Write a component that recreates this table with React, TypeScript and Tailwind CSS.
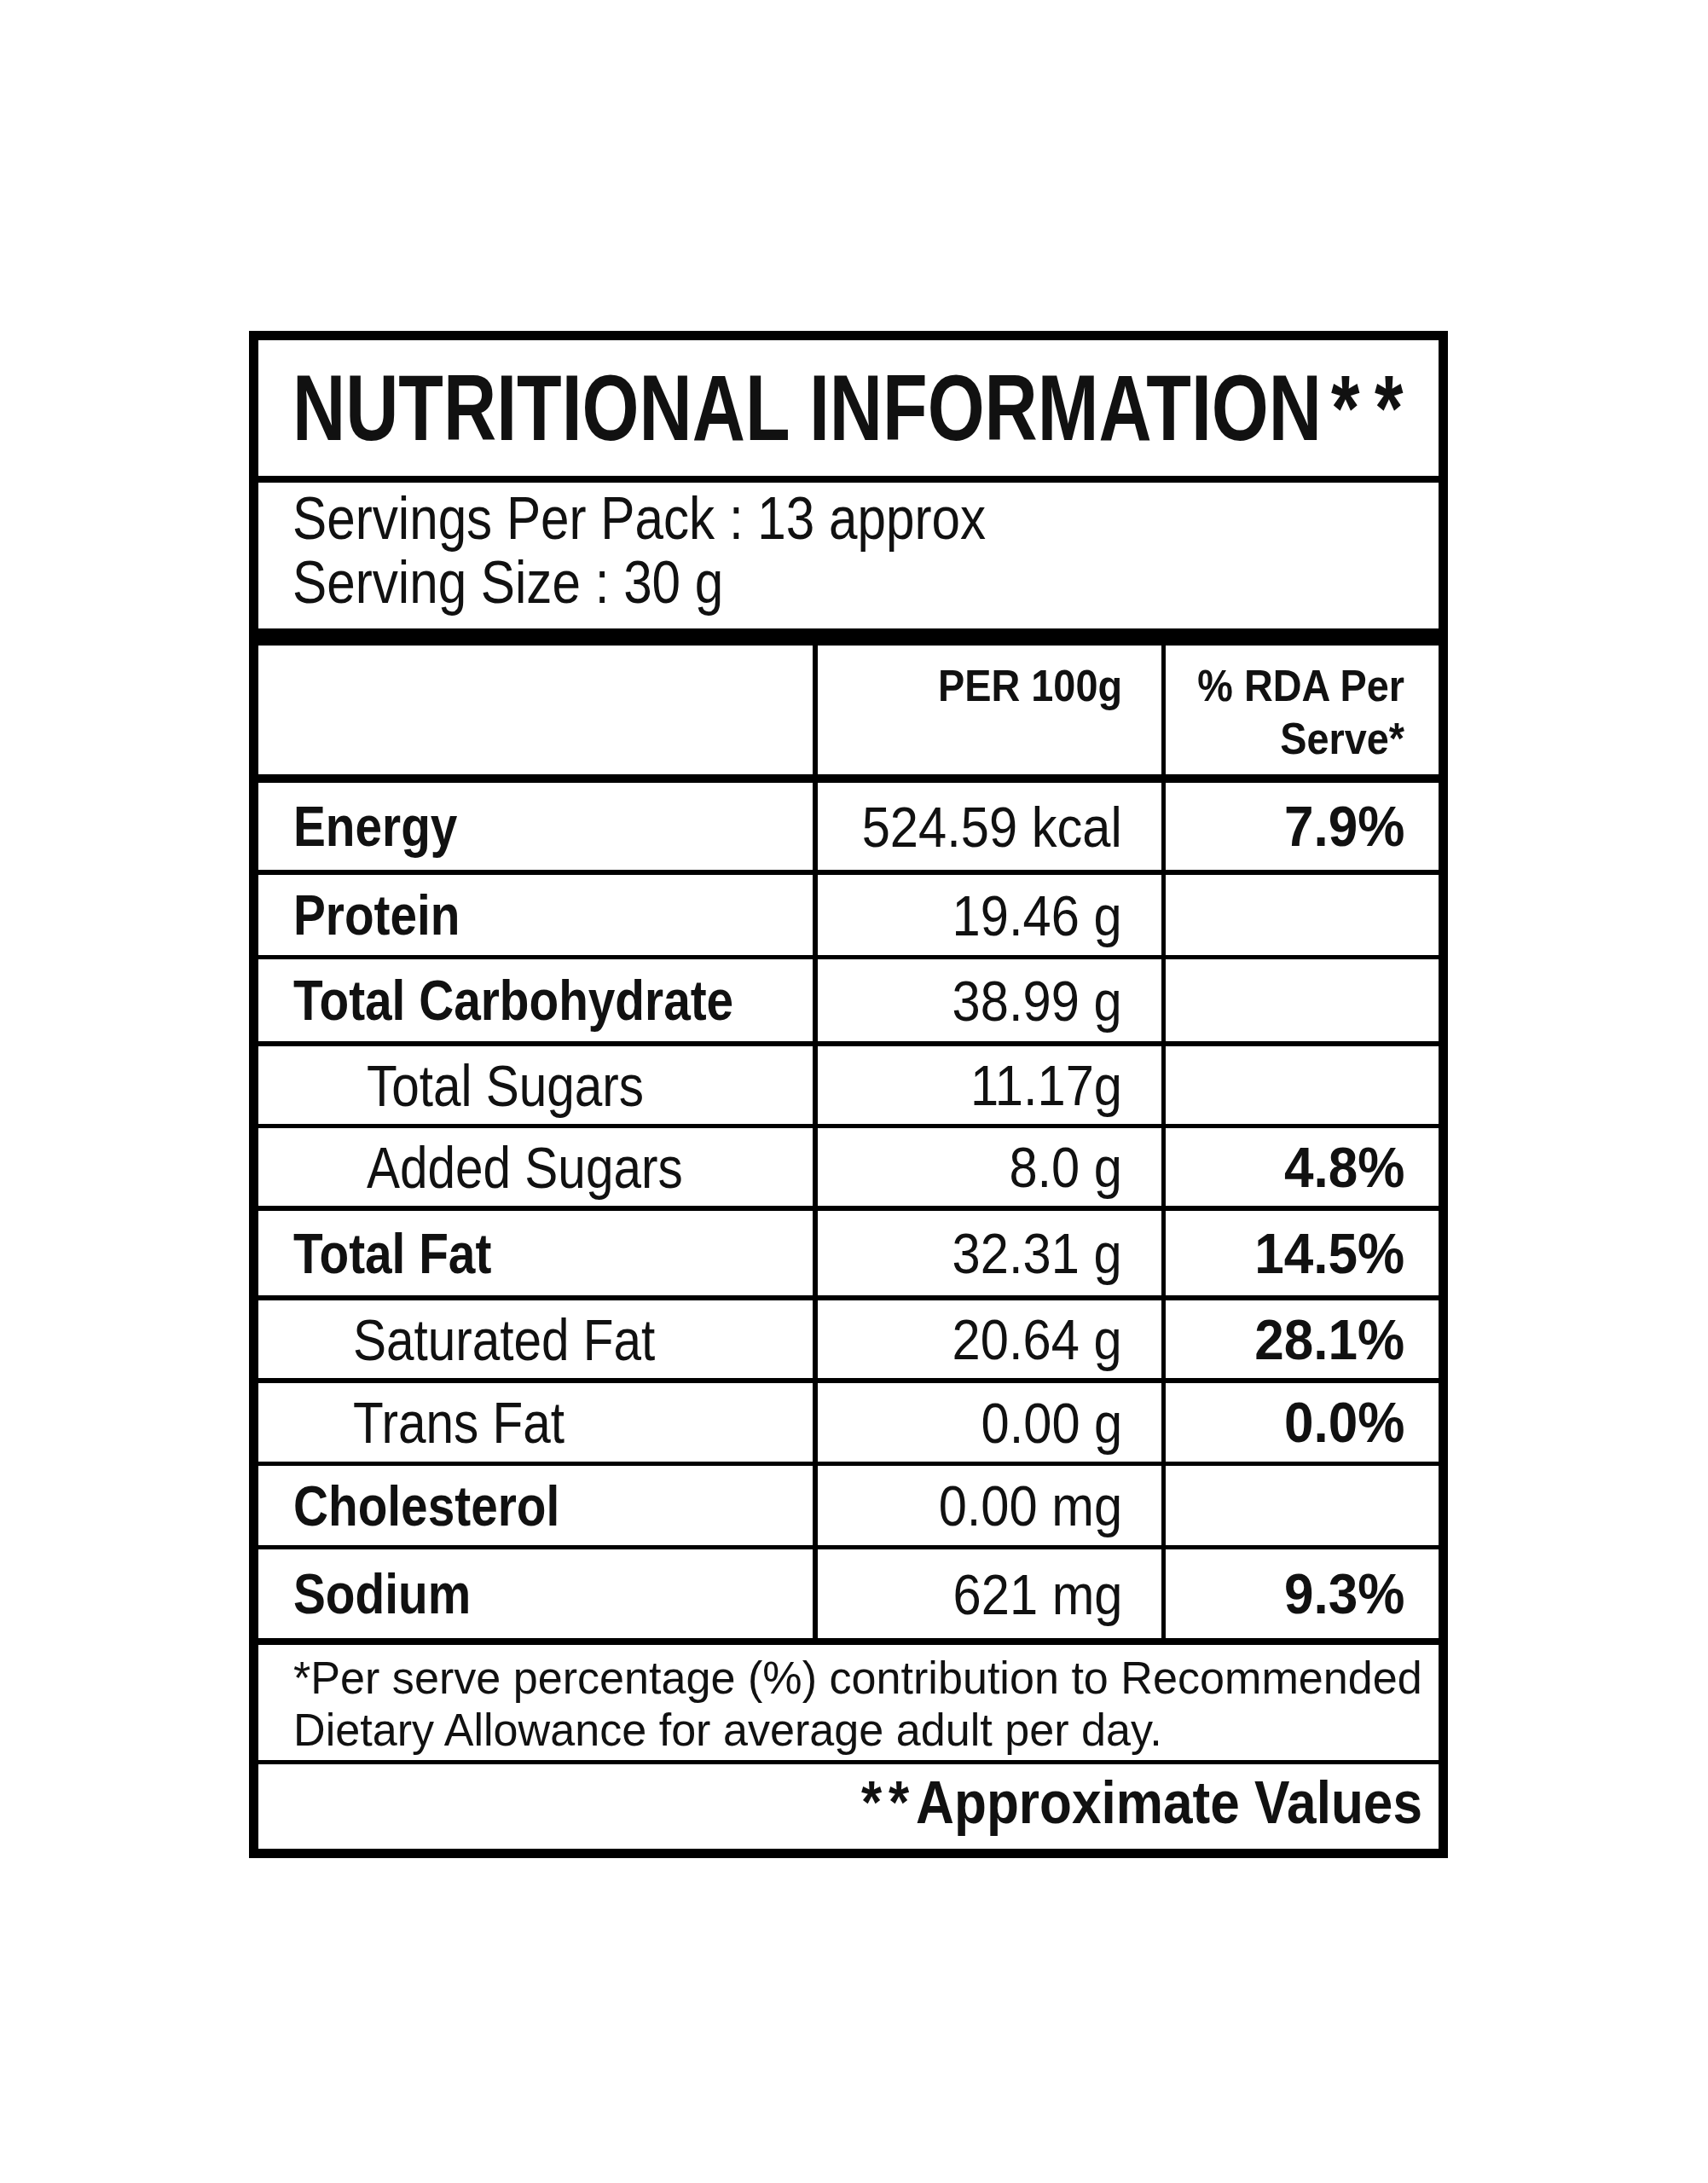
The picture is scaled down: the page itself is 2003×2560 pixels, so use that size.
const SANS = "font-['Liberation_Sans','Arial',sans-serif]";

type Row = {
  label: string;
  value: string;
  rda?: string;
  bold: boolean;
  box: string;
  pad: string;
};

const rows: Row[] = [
  { label: "Energy", value: "524.59 kcal", rda: "7.9%", bold: true, box: "h-[108px] border-b-[6px]", pad: "pl-[41px]" },
  { label: "Protein", value: "19.46 g", bold: true, box: "h-[99px] border-b-[5px]", pad: "pl-[41px]" },
  { label: "Total Carbohydrate", value: "38.99 g", bold: true, box: "h-[102px] border-b-[6px]", pad: "pl-[41px]" },
  { label: "Total Sugars", value: "11.17g", bold: false, box: "h-[96px] border-b-[5px]", pad: "pl-[127px]" },
  { label: "Added Sugars", value: "8.0 g", rda: "4.8%", bold: false, box: "h-[97px] border-b-[6px]", pad: "pl-[127px]" },
  { label: "Total Fat", value: "32.31 g", rda: "14.5%", bold: true, box: "h-[105px] border-b-[6px]", pad: "pl-[41px]" },
  { label: "Saturated Fat", value: "20.64 g", rda: "28.1%", bold: false, box: "h-[97px] border-b-[6px]", pad: "pl-[111px]" },
  { label: "Trans Fat", value: "0.00 g", rda: "0.0%", bold: false, box: "h-[97px] border-b-[5px]", pad: "pl-[111px]" },
  { label: "Cholesterol", value: "0.00 mg", bold: true, box: "h-[98px] border-b-[5px]", pad: "pl-[41px]" },
  { label: "Sodium", value: "621 mg", rda: "9.3%", bold: true, box: "h-[112px] border-b-[8px]", pad: "pl-[41px]" },
];

// the label face is a condensed grotesque; squeeze Liberation Sans to the same widths
function NutrientRow({ row }: { row: Row }) {
  return (
    <div className={`flex border-black ${row.box}`}>
      <div className={`flex w-[656px] items-center border-r-[6px] border-black ${row.pad}`}>
        {row.bold ? (
          <span className="inline-block origin-left scale-x-[0.86] text-[66px] font-bold leading-none whitespace-nowrap">
            {row.label}
          </span>
        ) : (
          <span className="inline-block origin-left scale-x-[0.86] text-[68px] leading-none whitespace-nowrap">
            {row.label}
          </span>
        )}
      </div>
      <div className="flex w-[408px] items-center justify-end border-r-[5px] border-black pr-[46px]">
        <span className="inline-block origin-right scale-x-[0.89] text-[67px] leading-none whitespace-nowrap">
          {row.value}
        </span>
      </div>
      <div className="flex flex-1 items-center justify-end pr-[40px]">
        {row.rda && (
          <span className="inline-block origin-right scale-x-[0.94] text-[66px] font-bold leading-none whitespace-nowrap">
            {row.rda}
          </span>
        )}
      </div>
    </div>
  );
}

export default function App() {
  return (
    <div className={`${SANS} min-h-[2560px] w-full bg-white pt-[388px] text-[#111]`}>
      <div className="ml-[292px] w-[1406px] border-[11px] border-black">
        {/* title */}
        <div className="flex h-[167px] items-center border-b-[8px] border-black pl-[40px]">
          <h1 className="inline-block origin-left scale-x-[0.79] text-[109px] font-bold leading-none whitespace-nowrap">
            NUTRITIONAL INFORMATION<span className="ml-[14px] tracking-[22px]">**</span>
          </h1>
        </div>

        {/* servings */}
        <div className="h-[191px] border-b-[20px] border-black pl-[40px] pt-[5px] text-[70px] leading-[75px]">
          <p className="origin-left scale-x-[0.86] whitespace-nowrap">Servings Per Pack : 13 approx</p>
          <p className="origin-left scale-x-[0.86] whitespace-nowrap">Serving Size : 30 g</p>
        </div>

        {/* column heads */}
        <div className="flex h-[161px] border-b-[10px] border-black text-[52px] font-bold leading-[62px]">
          <div className="w-[656px] border-r-[6px] border-black" />
          <div className="w-[408px] border-r-[5px] border-black pr-[46px] pt-[16px] text-right">
            <p className="origin-right scale-x-[0.9] whitespace-nowrap">PER 100g</p>
          </div>
          <div className="flex-1 pr-[40px] pt-[16px] text-right">
            <p className="origin-right scale-x-[0.9] whitespace-nowrap">% RDA Per</p>
            <p className="origin-right scale-x-[0.9] whitespace-nowrap">Serve*</p>
          </div>
        </div>

        {rows.map((row) => (
          <NutrientRow key={row.label} row={row} />
        ))}

        {/* footnote */}
        <div className="h-[140px] border-b-[5px] border-black pl-[41px] pt-[8px] text-[54px] leading-[61px]">
          <p className="origin-left scale-x-[0.965] whitespace-nowrap">
            *Per serve percentage (%) contribution to Recommended
          </p>
          <p className="origin-left scale-x-[0.965] whitespace-nowrap">Dietary Allowance for average adult per day.</p>
        </div>

        <div className="flex h-[99px] items-center justify-end pb-[10px] pr-[19px]">
          <span className="inline-block origin-right scale-x-[0.875] text-[71px] font-bold leading-none whitespace-nowrap">
            <span className="tracking-[9px]">**</span>Approximate Values
          </span>
        </div>
      </div>
    </div>
  );
}
